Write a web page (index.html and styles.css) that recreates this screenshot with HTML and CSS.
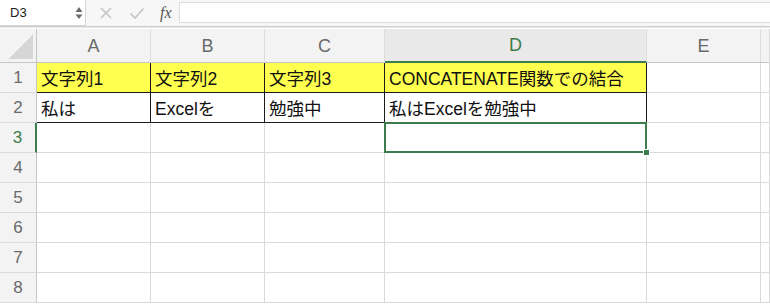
FILE: index.html
```html
<!doctype html>
<html lang="ja">
    <head>
        <meta charset="UTF-8" />
        <title>CONCATENATE</title>
        <link rel="stylesheet" href="styles.css">
    </head>
    <body>
        <div class="toolbar">
            <div class="namebox">
                <span>D3</span>
                <span class="spin">
                    <svg viewBox="0 0 8 14" width="8" height="14">
                        <path d="M4 1 L7.5 6 L0.5 6 Z"></path>
                        <path d="M0.5 8.5 L7.5 8.5 L4 13 Z"></path>
                    </svg>
                </span>
            </div>
            <div class="actions">
                <svg class="act" viewBox="0 0 14 14" width="14" height="14">
                    <path d="M2 2 L12 12 M12 2 L2 12"></path>
                </svg>
                <svg class="act" viewBox="0 0 16 14" width="16" height="14">
                    <path d="M1.5 7.5 L6 12 L14.5 2.5"></path>
                </svg>
                <span class="fx">fx</span>
            </div>
            <div class="formula"></div>
        </div>

        <div class="sheet">
            <div class="hd corner"><span class="tri"></span></div>
            <div class="hd col">A</div>
            <div class="hd col">B</div>
            <div class="hd col">C</div>
            <div class="hd col active">D</div>
            <div class="hd col">E</div>
            <div class="hd col"></div>

            <div class="hd row">1</div>
            <div class="cell yel b">文字列1</div>
            <div class="cell yel b">文字列2</div>
            <div class="cell yel b">文字列3</div>
            <div class="cell yel b">CONCATENATE関数での結合</div>
            <div class="cell"></div>
            <div class="cell"></div>

            <div class="hd row">2</div>
            <div class="cell b">私は</div>
            <div class="cell b">Excelを</div>
            <div class="cell b">勉強中</div>
            <div class="cell b">私はExcelを勉強中</div>
            <div class="cell"></div>
            <div class="cell"></div>

            <div class="hd row active">3</div>
            <div class="cell"></div>
            <div class="cell"></div>
            <div class="cell"></div>
            <div class="cell sel"><span class="handle"></span></div>
            <div class="cell"></div>
            <div class="cell"></div>

            <div class="hd row">4</div>
            <div class="cell"></div><div class="cell"></div><div class="cell"></div><div class="cell"></div><div class="cell"></div><div class="cell"></div>
            <div class="hd row">5</div>
            <div class="cell"></div><div class="cell"></div><div class="cell"></div><div class="cell"></div><div class="cell"></div><div class="cell"></div>
            <div class="hd row">6</div>
            <div class="cell"></div><div class="cell"></div><div class="cell"></div><div class="cell"></div><div class="cell"></div><div class="cell"></div>
            <div class="hd row">7</div>
            <div class="cell"></div><div class="cell"></div><div class="cell"></div><div class="cell"></div><div class="cell"></div><div class="cell"></div>
            <div class="hd row">8</div>
            <div class="cell"></div><div class="cell"></div><div class="cell"></div><div class="cell"></div><div class="cell"></div><div class="cell"></div>
        </div>
    </body>
</html>
```

FILE: styles.css
```css
* {
    margin: 0;
    padding: 0;
    box-sizing: border-box;
}

body {
    font-family: "Liberation Sans", "Noto Sans CJK JP", sans-serif;
    background: #ffffff;
    width: 770px;
    height: 304px;
    overflow: hidden;
}

/* barre de formule */
.toolbar {
    height: 27px;
    display: flex;
    align-items: flex-start;
    background: #f7f7f7;
    border-bottom: 1px solid #cfcfcf;
    box-shadow: 0 1px 0 #e6e6e6;
    margin-bottom: 2px;
}

.namebox {
    width: 86px;
    height: 26px;
    background: #ffffff;
    border-right: 1px solid #d4d4d4;
    border-bottom: 1px solid #d4d4d4;
    display: flex;
    align-items: center;
    justify-content: space-between;
    padding: 0 2px 0 10px;
    font-size: 13px;
    color: #222;
}

.spin svg {
    display: block;
    fill: #6b6b6b;
}

.actions {
    display: flex;
    align-items: center;
    height: 26px;
    padding-left: 13px;
    gap: 16px;
}

.act {
    fill: none;
    stroke: #c4c4c4;
    stroke-width: 1.6;
}

.fx {
    font-family: "Liberation Serif", serif;
    font-style: italic;
    font-size: 16px;
    color: #555;
    margin-left: -1px;
}

.formula {
    flex: 1;
    height: 21px;
    margin: 2px 0 0 7px;
    background: #ffffff;
    border: 1px solid #dddddd;
    border-right: none;
}

/* feuille */
.sheet {
    display: grid;
    grid-template-columns: 37px 114px 114px 120px 262px 114px 1fr;
    grid-template-rows: 34px;
    grid-auto-rows: 30px;
}

.hd {
    background: #f3f3f3;
    color: #6a6a6a;
    font-size: 17px;
    display: flex;
    align-items: center;
    justify-content: center;
    border-right: 1px solid #dcdcdc;
    border-bottom: 1px solid #dcdcdc;
}

.hd.col {
    border-bottom-color: #c6c6c6;
    padding-top: 1px;
    font-size: 18px;
}

.hd.row {
    border-right-color: #c6c6c6;
    font-size: 17px;
}

.hd.col.active {
    background: #e9e9e9;
    color: #3d7d4d;
    border-bottom: 2px solid #3d7d4d;
}

.hd.row.active {
    color: #3d7d4d;
    border-right: 2px solid #3d7d4d;
}

.corner {
    justify-content: flex-end;
    align-items: flex-end;
    padding: 0 3px 3px 0;
    border-bottom-color: #c6c6c6;
    border-right-color: #c6c6c6;
}

.tri {
    width: 24px;
    height: 24px;
    background: linear-gradient(135deg, transparent 50%, #d6d6d6 50%);
}

.cell {
    border-right: 1px solid #dadada;
    border-bottom: 1px solid #dadada;
    font-family: "Liberation Sans", "Noto Sans CJK JP", sans-serif;
    font-size: 17.5px;
    color: #111;
    padding: 0 4px;
    display: flex;
    align-items: center;
    white-space: nowrap;
}

.cell.yel {
    background: #ffff4f;
}

.cell.b {
    border-right-color: #1c1c1c;
    border-bottom-color: #1c1c1c;
}

.cell.sel {
    position: relative;
}

.cell.sel::after {
    content: "";
    position: absolute;
    top: -1px;
    left: -1px;
    right: -1px;
    bottom: -1px;
    border: 2px solid #3d7d4d;
}

.handle {
    position: absolute;
    right: -4px;
    bottom: -4px;
    width: 7px;
    height: 7px;
    background: #3d7d4d;
    border: 1px solid #ffffff;
    z-index: 2;
}
```
